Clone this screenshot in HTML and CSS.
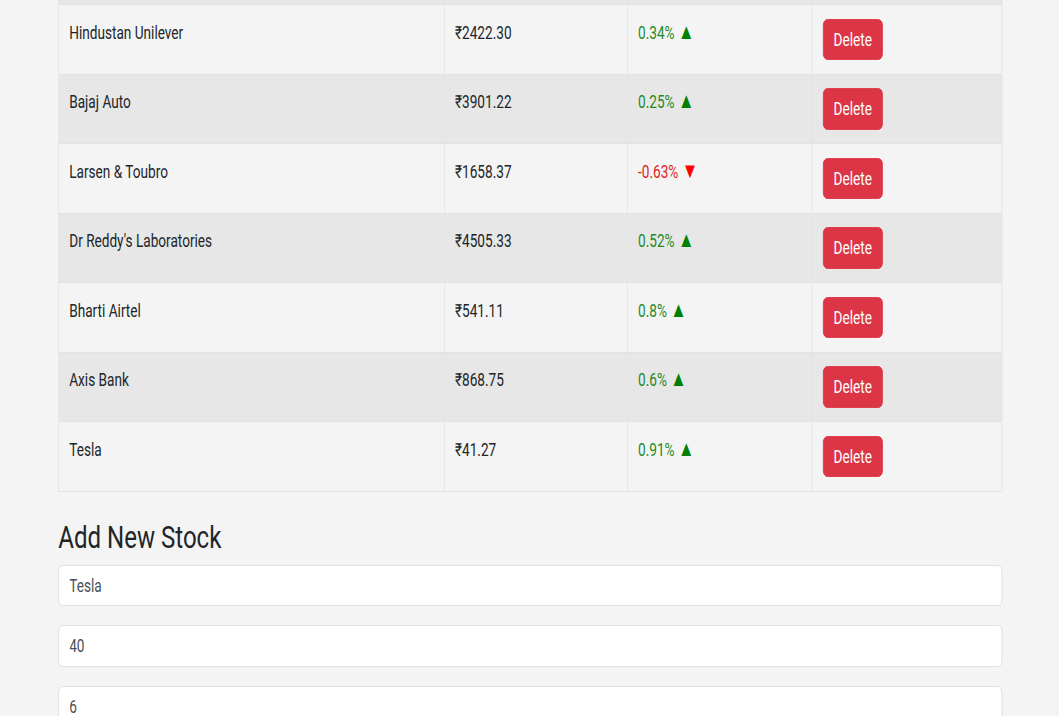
FILE: index.html
```html
<!DOCTYPE html>
<html lang="en">
<head>
<meta charset="utf-8">
<title>Stock Tracker</title>
<link rel="stylesheet" href="styles.css">
</head>
<body>
<div class="page">
  <div class="container">
    <table class="stocks">
      <tbody>
        <tr class="row-prev"><td></td><td></td><td></td><td></td></tr>
        <tr><td>Hindustan Unilever</td><td>₹2422.30</td><td class="up">0.34% <span class="tri tri-up">▲</span></td><td><button class="btn-delete">Delete</button></td></tr>
        <tr><td>Bajaj Auto</td><td>₹3901.22</td><td class="up">0.25% <span class="tri tri-up">▲</span></td><td><button class="btn-delete">Delete</button></td></tr>
        <tr><td>Larsen &amp; Toubro</td><td>₹1658.37</td><td class="down">-0.63% <span class="tri tri-down">▼</span></td><td><button class="btn-delete">Delete</button></td></tr>
        <tr><td>Dr Reddy's Laboratories</td><td>₹4505.33</td><td class="up">0.52% <span class="tri tri-up">▲</span></td><td><button class="btn-delete">Delete</button></td></tr>
        <tr><td>Bharti Airtel</td><td>₹541.11</td><td class="up">0.8% <span class="tri tri-up">▲</span></td><td><button class="btn-delete">Delete</button></td></tr>
        <tr><td>Axis Bank</td><td>₹868.75</td><td class="up">0.6% <span class="tri tri-up">▲</span></td><td><button class="btn-delete">Delete</button></td></tr>
        <tr><td>Tesla</td><td>₹41.27</td><td class="up">0.91% <span class="tri tri-up">▲</span></td><td><button class="btn-delete">Delete</button></td></tr>
      </tbody>
    </table>

    <h3 class="section-title">Add New Stock</h3>
    <form class="add-form">
      <input class="field" type="text" value="Tesla">
      <input class="field" type="text" value="40">
      <input class="field" type="text" value="6">
      <input class="field" type="text" value="">
    </form>
  </div>
</div>
</body>
</html>
```
FILE: styles.css
```css
html, body {
  margin: 0;
  padding: 0;
  overflow: hidden;
  background: #f4f4f4;
}

body {
  font-family: Roboto, "Liberation Sans", Arial, sans-serif;
  font-size: 18px;
  line-height: 1.5;
  color: #212529;
}

.page {
  width: 1400px;
  transform: scaleX(0.75643);
  transform-origin: 0 0;
  margin-top: -65.5px;
}

.container {
  margin: 0 75px 0 77px;
}

.stocks {
  width: 100%;
  border-collapse: collapse;
  margin-bottom: 26px;
}

.stocks td {
  border: 1px solid #e2e2e2;
  padding: 13.5px 13.5px;
  vertical-align: top;
  text-align: left;
}

.stocks .row-prev td {
  height: 41.5px;
}

.stocks tr:nth-child(odd) td {
  background: rgba(0, 0, 0, 0.05);
}

.stocks td:nth-child(1) { width: 482px; }
.stocks td:nth-child(2) { width: 214px; }
.stocks td:nth-child(3) { width: 216px; }

.up { color: #1f8a1f; }
.down { color: #e02424; }

.tri {
  font-size: 22px;
  line-height: 1;
}
.tri-up { color: #008000; }
.tri-down { color: #ff0000; }

.btn-delete {
  font-family: inherit;
  font-size: 18px;
  line-height: 1.5;
  color: #fff;
  background: #dc3545;
  border: 1px solid #dc3545;
  border-radius: 6px;
  padding: 6.25px 13.5px;
  cursor: pointer;
}

.section-title {
  font-size: 31.8px;
  font-weight: 400;
  line-height: 1.2;
  margin: 0 0 9px;
  color: #212529;
}

.add-form {
  display: flex;
  flex-direction: column;
  gap: 19px;
}

.field {
  font-family: inherit;
  font-size: 18px;
  line-height: 1.5;
  color: #495057;
  background: #fff;
  border: 1px solid #dcdcdc;
  border-radius: 6px;
  padding: 6.25px 13.5px;
  box-sizing: border-box;
  width: 100%;
}
```
